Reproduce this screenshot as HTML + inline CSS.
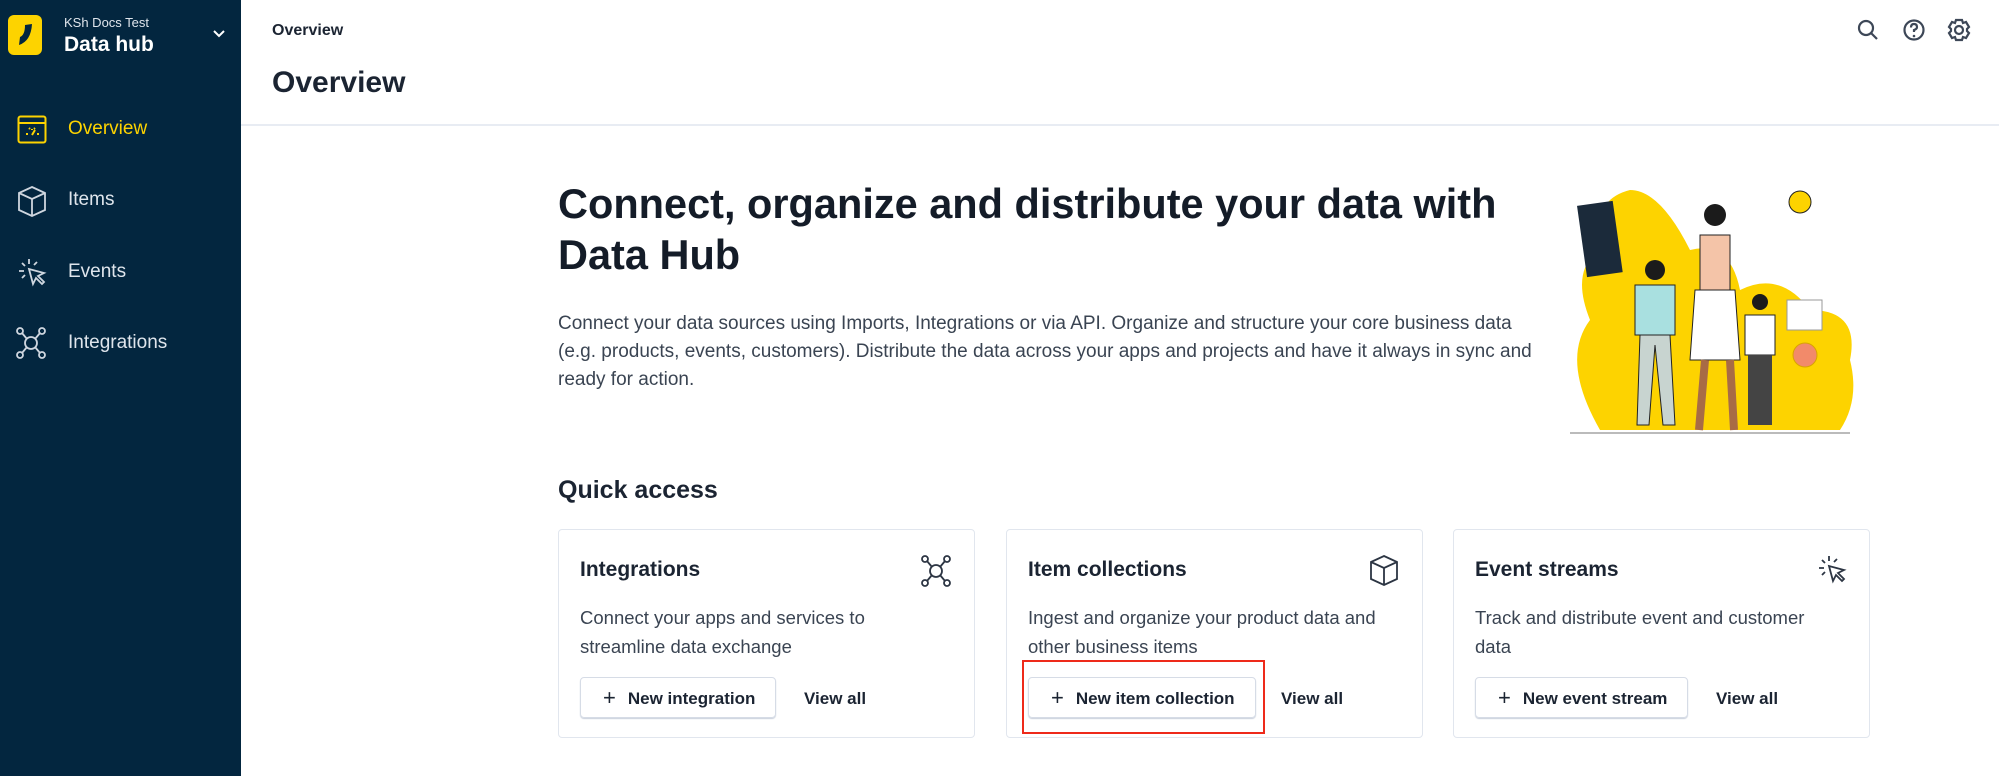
<!DOCTYPE html>
<html><head><meta charset="utf-8"><style>
*{box-sizing:border-box;margin:0;padding:0}
body{width:1999px;height:776px;overflow:hidden;background:#fff;font-family:"Liberation Sans",sans-serif;color:#1b2432;position:relative}
.side{position:absolute;left:0;top:0;width:241px;height:776px;background:#03263f}
.abs{position:absolute;white-space:nowrap}
.nav{position:absolute;left:68px;font-size:19px;color:#dfe5ec}
.card{position:absolute;top:529px;width:417px;height:209px;border:1.5px solid #e1e6ee;border-radius:4px}
.card h3{position:absolute;left:21px;top:28px;font-size:21px;font-weight:600}
.card p{position:absolute;left:21px;top:73px;font-size:18.5px;line-height:29px;color:#3a4452;width:390px}
.btn{position:absolute;left:21px;top:147px;height:41px;border:1.5px solid #d6dce6;border-radius:4px;font-size:17px;font-weight:600;line-height:38px;padding:0 20px 0 22px;box-shadow:0 1px 1px #c9d0dc}
.btn b{font-weight:400;font-size:22px;margin-right:12px;position:relative;top:1px}
.va{position:absolute;top:159px;font-size:17px;font-weight:600}
.ci{position:absolute;right:22px;top:24px}
</style></head><body>
<div class="side">
<div class="abs" style="left:8px;top:15px;width:34px;height:40px;background:#fdd300;border-radius:6px"></div>
<svg class="abs" style="left:8px;top:15px" width="34" height="40"><path d="M24 9 Q23 26 11 30 L12 22 Q17 20 17 10 Z" fill="#03263f"/></svg>
<div class="abs" style="left:64px;top:15px;font-size:13px;color:#dfe5ec">KSh Docs Test</div>
<div class="abs" style="left:64px;top:33px;font-size:21px;font-weight:700;color:#fff">Data hub</div>
<svg class="abs" style="left:212px;top:29px" width="14" height="10"><path d="M2 2l5 5 5-5" stroke="#fff" stroke-width="2" fill="none"/></svg>
<svg class="abs" style="left:17px;top:115px" width="32" height="30"><rect x="1.5" y="1.5" width="27" height="26" rx="2" fill="none" stroke="#fdd300" stroke-width="2"/><path d="M1.5 8h27" stroke="#fdd300" stroke-width="2"/><path d="M9 19l2 0M20 19l2 0M15 14v1M12 13l1 1M18 13l-1 1M15 20l3-5" stroke="#fdd300" stroke-width="2"/></svg>
<div class="nav" style="top:118px;color:#fdd300">Overview</div>
<svg class="abs" style="left:17px;top:185px" width="30" height="33"><path d="M15 2L28 8V25L15 31 2 25V8Z M2 8l13 6 13-6 M15 14v17" fill="none" stroke="#cfd6df" stroke-width="1.8"/></svg>
<div class="nav" style="top:189px">Items</div>
<svg class="abs" style="left:17px;top:257px" width="30" height="30"><path d="M12 2v5M5 6l3 3M20 5l-3 3M2 14h5M5 21l3-3M12 12l4 15 3-6 6 6 2-2-6-6 6-3z" fill="none" stroke="#cfd6df" stroke-width="1.8"/></svg>
<div class="nav" style="top:261px">Events</div>
<svg class="abs" style="left:15px;top:326px" width="32" height="34"><g fill="none" stroke="#cfd6df" stroke-width="1.8"><circle cx="5" cy="5" r="3"/><circle cx="27" cy="5" r="3"/><circle cx="5" cy="29" r="3"/><circle cx="27" cy="29" r="3"/><circle cx="16" cy="17" r="6"/><path d="M7 7l5 6M25 7l-5 6M7 27l5-6M25 27l-5-6"/></g></svg>
<div class="nav" style="top:332px">Integrations</div>
</div>

<div class="abs" style="left:272px;top:22px;font-size:16px;font-weight:600">Overview</div>
<div class="abs" style="left:272px;top:66px;font-size:30px;font-weight:600">Overview</div>
<div class="abs" style="left:241px;top:124px;width:1758px;height:2px;background:#e8ecf3"></div>
<svg class="abs" style="left:1855px;top:17px" width="130" height="28"><g fill="none" stroke="#3d4757" stroke-width="2.2"><circle cx="11" cy="11" r="7"/><path d="M16 16l6 6"/><circle cx="59" cy="13" r="9.5"/><path d="M56 10.5q0-3.5 3-3.5t3 3q0 2-3 3v2"/><circle cx="104" cy="13" r="4"/><path d="M101 3h6l1 3 3 -1 3 5-2 2v2l2 2-3 5-3-1-1 3h-6l-1-3-3 1-3-5 2-2v-2l-2-2 3-5 3 1z"/></g><circle cx="59" cy="19" r="1.3" fill="#3d4757"/></svg>

<div class="abs" style="left:558px;top:178px;font-size:41.5px;font-weight:600;line-height:51px;color:#141c28">Connect, organize and distribute your data with<br>Data Hub</div>
<div class="abs" style="left:558px;top:310px;font-size:19px;line-height:28px;color:#3a4452">Connect your data sources using Imports, Integrations or via API. Organize and structure your core business data<br>(e.g. products, events, customers). Distribute the data across your apps and projects and have it always in sync and<br>ready for action.</div>

<svg class="abs" style="left:1560px;top:160px" width="300" height="280">
<path d="M40 270 Q0 200 30 160 Q10 110 40 90 Q30 40 70 30 Q100 30 130 90 Q170 80 180 130 Q220 110 250 150 Q300 150 290 200 Q300 240 280 270 Z" fill="#fdd300"/>
<rect x="22" y="43" width="36" height="72" transform="rotate(-8 40 80)" fill="#1b2a3a"/>
<path d="M75 125 h40 v50 h-40z" fill="#a9e0e0" stroke="#222"/>
<path d="M80 175 h30 l5 90 h-12 l-8-80 -6 80 h-12z" fill="#c8d4d0" stroke="#222"/>
<circle cx="95" cy="110" r="10" fill="#1b1b1b"/>
<circle cx="155" cy="55" r="11" fill="#1b1b1b"/>
<path d="M140 75 h30 v55 h-30z" fill="#f4c4a8" stroke="#222"/>
<path d="M135 130 h40 l5 70 h-50z" fill="#fff" stroke="#222"/>
<path d="M145 200 l-6 70 M170 200 l4 70" stroke="#a86b45" stroke-width="8"/>
<circle cx="240" cy="42" r="11" fill="#fdd300" stroke="#222"/>
<circle cx="200" cy="142" r="8" fill="#1b1b1b"/>
<path d="M185 155 h30 v40 h-30z" fill="#fff" stroke="#222"/>
<path d="M188 195 h24 v70 h-24z" fill="#444"/>
<rect x="227" y="140" width="35" height="30" fill="#fff" stroke="#999"/>
<circle cx="245" cy="195" r="12" fill="#f28a6a" stroke="#d9a400"/>
<path d="M10 273h280" stroke="#bbb" stroke-width="2"/>
</svg>

<div class="abs" style="left:558px;top:476px;font-size:25px;font-weight:600">Quick access</div>

<div class="card" style="left:558px"><h3>Integrations</h3>
<svg class="ci" width="32" height="34"><g fill="none" stroke="#2c3543" stroke-width="1.8"><circle cx="5" cy="5" r="3"/><circle cx="27" cy="5" r="3"/><circle cx="5" cy="29" r="3"/><circle cx="27" cy="29" r="3"/><circle cx="16" cy="17" r="6"/><path d="M7 7l5 6M25 7l-5 6M7 27l5-6M25 27l-5-6"/></g></svg>
<p>Connect your apps and services to<br>streamline data exchange</p>
<div class="btn"><b>+</b>New integration</div><div class="va" style="left:245px">View all</div></div>

<div class="card" style="left:1006px"><h3>Item collections</h3>
<svg class="ci" width="32" height="33"><path d="M16 2L29 8V25L16 31 3 25V8Z M3 8l13 6 13-6 M16 14v17" fill="none" stroke="#2c3543" stroke-width="1.8"/></svg>
<p>Ingest and organize your product data and<br>other business items</p>
<div class="btn"><b>+</b>New item collection</div><div class="va" style="left:274px">View all</div></div>

<div class="card" style="left:1453px"><h3>Event streams</h3>
<svg class="ci" width="30" height="30"><path d="M12 2v5M5 6l3 3M20 5l-3 3M2 14h5M5 21l3-3M12 12l4 15 3-6 6 6 2-2-6-6 6-3z" fill="none" stroke="#2c3543" stroke-width="1.8"/></svg>
<p>Track and distribute event and customer<br>data</p>
<div class="btn"><b>+</b>New event stream</div><div class="va" style="left:262px">View all</div></div>

<div class="abs" style="left:1022px;top:660px;width:243px;height:74px;border:2.5px solid #ee2a1a"></div>
</body></html>
